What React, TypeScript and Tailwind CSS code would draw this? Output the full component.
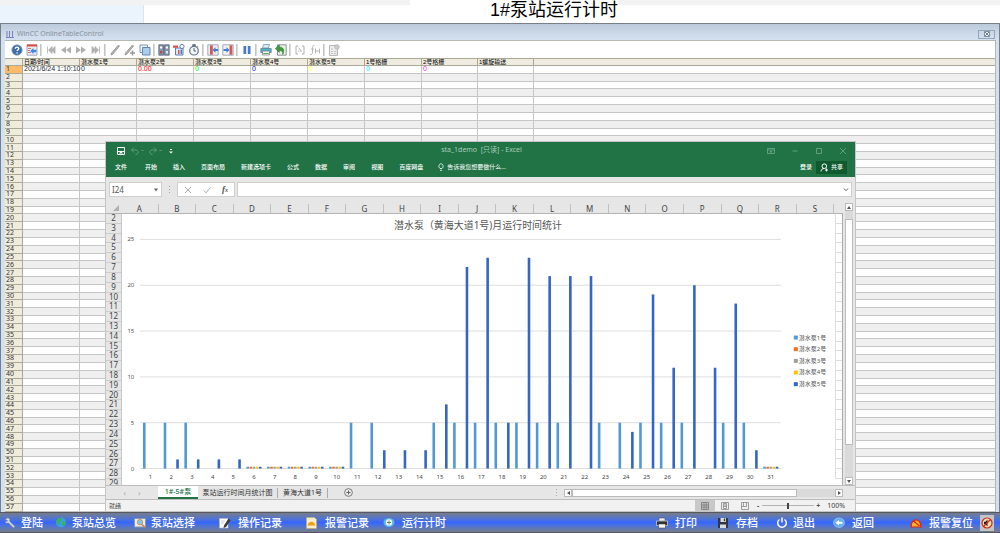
import { useState } from 'react'
import type { ReactNode } from 'react'

const columns = [
  { name: '日期/时间', value: '2021/6/24 1:10:10', color: 'text-gray-800', width: 'w-[57px]' },
  { name: '潜水泵1号', value: '0', color: 'text-gray-800', width: 'w-[57px]' },
  { name: '潜水泵2号', value: '0.00', color: 'text-[#ff0000]', width: 'w-[57px]' },
  { name: '潜水泵3号', value: '0', color: 'text-[#00ff00]', width: 'w-[57px]' },
  { name: '潜水泵4号', value: '0', color: 'text-[#0000ff]', width: 'w-[57px]' },
  { name: '潜水泵5号', value: '0', color: 'text-[#ffff00]', width: 'w-[57px]' },
  { name: '1号格栅', value: '0', color: 'text-[#00ffff]', width: 'w-[57px]' },
  { name: '2号格栅', value: '0', color: 'text-[#ff00ff]', width: 'w-[56px]' },
  { name: '1螺旋输送', value: '', color: 'text-gray-800', width: 'w-[56px]' },
]

const tableRows = Array.from({ length: 57 }, (_, i) => i + 1)

const series = [
  { name: '潜水泵1号', color: '#5099d6' },
  { name: '潜水泵2号', color: '#f0711f' },
  { name: '潜水泵3号', color: '#a0a0a0' },
  { name: '潜水泵4号', color: '#ffc000' },
  { name: '潜水泵5号', color: '#3566c1' },
]

const TINY = 0.2
const tinyDays = [6, 7, 8, 9, 10, 31]
const pump1Days = [1, 2, 3, 11, 12, 15, 16, 17, 18, 19, 20, 21, 23, 24, 25, 26, 27, 29, 30]
const pump5: Record<number, number> = {
  2: 1, 3: 1, 4: 1, 5: 1, 12: 2, 13: 2, 14: 2, 15: 7, 16: 22, 17: 23, 18: 5, 19: 23, 20: 21,
  21: 21, 22: 21, 24: 4, 25: 19, 26: 11, 27: 20, 28: 11, 29: 18, 30: 2,
}
const days = Array.from({ length: 31 }, (_, i) => i + 1)

function hours(day: number, s: number) {
  if (tinyDays.includes(day)) return TINY
  if (s === 0) return pump1Days.includes(day) ? 5 : 0
  if (s === 4) return pump5[day] || 0
  return 0
}

/* ---------- toolbar icons ---------- */

function Icon({ children, className = 'size-3' }: { children: ReactNode; className?: string }) {
  return (
    <svg viewBox="0 0 12 12" className={`${className} shrink-0`} fill="none" aria-hidden="true">
      {children}
    </svg>
  )
}

const G = '#b0b0b0'

const toolGroups: { label: string; icon: ReactNode }[][] = [
  [
    { label: '帮助', icon: <><circle cx="6" cy="6" r="5.2" fill="#3f6fa8" stroke="#8a9fb8" strokeWidth=".8" /><path d="M4.3 4.8c0-2.4 3.5-2.2 3.5-.2 0 1.2-1.7 1.2-1.7 2.5M6.1 8.2v1.2" stroke="#fff" strokeWidth="1.3" /></> },
    { label: '配置', icon: <><path d="M1 .8h10v10.4H1z" fill="#e9eef6" stroke="#8896b0" strokeWidth=".8" /><path d="M1 .5h10v2H1z" fill="#e04a40" /><path d="M2 4.5h3M2 6.5h2M2 8.5h3" stroke="#d66" strokeWidth=".9" /><path d="M4.2 7l3.2-3v1.8h3v2.4h-3V10z" fill="#3f86dc" /></> },
  ],
  [
    { label: '第一条', icon: <path d="M2.5 2.5v7M10 2.5L6.5 6 10 9.500zM7 2.500L3.500 6 7 9.500z" fill={G} stroke={G} strokeWidth=".8" /> },
    { label: '上一页', icon: <path d="M6 2.500L1 6l5 3.500zM11 2.500L6 6l5 3.500z" fill={G} /> },
    { label: '下一页', icon: <path d="M1 2.500L6 6 1 9.500zM6 2.500L11 6 6 9.500z" fill={G} /> },
    { label: '最后一条', icon: <path d="M9.500 2.500v7M2 2.500L5.500 6 2 9.500zM5 2.500L8.500 6 5 9.500z" fill={G} stroke={G} strokeWidth=".8" /> },
  ],
  [
    { label: '编辑', icon: <path d="M9.500 1L10.500 2 4 10l-2 1 .5-2z" fill="#b5b5b5" stroke="#8f8f8f" strokeWidth=".8" /> },
    { label: '新建', icon: <><path d="M8.500 1L9.500 2 3 10l-2 1 .5-2z" fill="#b5b5b5" stroke="#8f8f8f" strokeWidth=".8" /><path d="M8.500 6.500v5M6 9h5" stroke="#9a9a9a" strokeWidth="1.500" /></> },
    { label: '复制', icon: <><path d="M1 1h7.500v7.500H1z" fill="#eef4fa" stroke="#7d96b8" /><path d="M3.500 3.500H11v7.500H3.500z" fill="#a9cdea" stroke="#5f87b0" /></> },
  ],
  [
    { label: '选择数据连接', icon: <><path d="M.8.800h4.700v10.400H.8zM6.500.800h4.700v10.400H6.500z" fill="#8595ae" stroke="#54647e" strokeWidth=".8" /><path d="M2 2.500h2.200v2H2zM7.800 2.500H10v2H7.800z" fill="#fff" /><path d="M2 7h2.200v2.500H2z" fill="#c04848" /><path d="M7.800 7H10v2.500H7.800z" fill="#dfe6ef" /></> },
    { label: '选择时间范围', icon: <><path d="M2.500 4h7.500v7H2.500z" fill="#dce8f6" stroke="#5c7fb4" /><path d="M0 1.500h5v2.300H0z" fill="#e2524a" /><path d="M5 6h1.500v4H5z" fill="#e2524a" /><path d="M7.500 5.500H9V10H7.500z" fill="#4d83c9" /><circle cx="9" cy="2.500" r="2.100" fill="#fff" stroke="#5780bd" /></> },
    { label: '时间基准', icon: <><path d="M4.700.500h2.600v1.500H4.700zM9 2l1.300 1" fill="#65768a" stroke="#65768a" strokeWidth=".8" /><circle cx="6" cy="6.700" r="4.300" fill="#f4f6f8" stroke="#65768a" strokeWidth="1.200" /><path d="M6 4v3h2" stroke="#465568" strokeWidth=".9" /></> },
  ],
  [
    { label: '上一列', icon: <><path d="M.8.800h10.400v10.400H.8z" fill="#eef1f6" stroke="#8a96aa" strokeWidth=".8" /><path d="M3 1.300h2.800v9.400H3z" fill="#d9574f" /><path d="M5.500 6l3-2.700v1.700H11v2H8.500v1.700z" fill="#3d7fd6" /></> },
    { label: '下一列', icon: <><path d="M.8.800h10.400v10.400H.8z" fill="#eef1f6" stroke="#8a96aa" strokeWidth=".8" /><path d="M7.500 1.300h2.800v9.400H7.500z" fill="#d9574f" /><path d="M7.500 6l-3-2.700v1.700H1.500v2h3v1.700z" fill="#3d7fd6" /></> },
  ],
  [{ label: '停止', icon: <path d="M2.500 2h2.700v8H2.500zM6.800 2h2.700v8H6.800z" fill="#4a76cc" /> }],
  [
    { label: '打印', icon: <><path d="M3.500.500h6L8.500 4H2.500z" fill="#dceaf8" stroke="#6f8ba8" strokeWidth=".7" /><path d="M.8 4.500h10.400v4H.8z" fill="#4fb3c6" stroke="#53758c" strokeWidth=".7" /><path d="M2.500 7h7v4h-7z" fill="#f4f4f4" stroke="#777" strokeWidth=".7" /><path d="M3.300 9.500h5.400" stroke="#4fae51" /></> },
    { label: '导出', icon: <><path d="M2.500.800h8.700v10.400H2.500z" fill="#eaf0e8" stroke="#6d7a86" strokeWidth=".8" /><path d="M.3 4.500L4.300 1v2c4.200 0 5.500 3 3.500 7.500.2-3-1-4-3.500-4v2z" fill="#3f9a3a" stroke="#236b20" strokeWidth=".5" /></> },
  ],
  [
    { label: '统计范围', icon: <path d="M4 2H2v8h2M8 2h2v8H8M4.500 4l2.500 2v2M4 7h1.500" stroke="#b0b0b0" strokeWidth="1" /> },
    { label: '计算统计', icon: <path d="M5.500 1.500C3.500 1 3.500 3 3.500 4.500v4C3.500 10 2.500 11 1 10.500M2 5h3M6.500 4.500v5M10.500 4.500v5M6.500 7h4" stroke="#b8b8b8" strokeWidth="1" /> },
  ],
  [{ label: '属性', icon: <><path d="M1.500 1.500h8v10h-8z" fill="#eee" stroke="#b8b8b8" /><path d="M3 5h2M3 7.500h2M3 9.500h2M6 7.500h2.500M6 9.500h2.500" stroke="#b5b5b5" strokeWidth=".8" /><circle cx="9" cy="3" r="2.300" fill="#ccc" stroke="#aaa" strokeWidth=".6" /></> }],
]

function Toolbar() {
  return (
    <div className="flex h-[17px] shrink-0 items-center bg-white pl-1">
      {toolGroups.map((group, i) => (
        <div key={i} className="flex items-center">
          {i > 0 && <span className="mx-[1px] h-3 w-[2px] border-r border-[#dcdcdc] bg-[#c4c4c4]" />}
          {group.map(t => (
            <button key={t.label} type="button" aria-label={t.label} title={t.label} className="flex w-[15px] items-center justify-center">
              <Icon>{t.icon}</Icon>
            </button>
          ))}
        </div>
      ))}
    </div>
  )
}

function OnlineTable() {
  return (
    <table className="h-full w-full table-fixed border-separate border-spacing-0 text-left font-['Liberation_Sans','Noto_Sans_CJK_SC',sans-serif] text-[7px] leading-[6px] whitespace-nowrap">
      <colgroup>
        <col className="w-[18px]" />
        {columns.map(c => <col key={c.name} className={c.width} />)}
        <col />
      </colgroup>
      <thead>
        <tr className="bg-[#efebdf]">
          <th className="border-t border-r border-b border-[#a9a998] p-0" />
          {columns.map(c => (
            <th key={c.name} className="border-t border-r border-b border-[#a9a998] py-0 pl-px text-[6px] font-normal text-black">{c.name}</th>
          ))}
          <th className="border-t border-b border-[#a9a998] p-0" />
        </tr>
      </thead>
      <tbody>
        {tableRows.map(n => (
          <tr key={n} className="odd:bg-white even:bg-[#efefef]">
            <th className={`border-r border-b border-[#a9a998] py-0 pl-px font-['Noto_Sans',sans-serif] font-normal text-[#333] ${n === 1 ? 'bg-[#fcbb6a]' : 'bg-[#efecdb]'}`}>{n}</th>
            {columns.map(c => (
              <td key={c.name} className={`border-r border-b border-[#c6c6c6] py-0 pl-px ${c.color}`}>{n === 1 ? c.value : ''}</td>
            ))}
            <td className="border-b border-[#c6c6c6] p-0" />
          </tr>
        ))}
      </tbody>
    </table>
  )
}

/* ---------- excel window ---------- */

const ribbonTabs = ['开始', '插入', '页面布局', '新建选项卡', '公式', '数据', '审阅', '视图', '百度网盘']
const letters = 'ABCDEFGHIJKLMNOPQRS'.split('')
const sheetRows = Array.from({ length: 27 }, (_, i) => i + 2)

function ExcelTitle() {
  return (
    <div className="bg-[#217346] text-white">
      <div className="grid h-[17px] grid-cols-3 items-center pr-2 pl-[10px] text-[7px]">
        <div className="flex items-center gap-1">
          <button type="button" aria-label="保存">
            <svg viewBox="0 0 10 10" className="size-[10px]" fill="none" stroke="#fff"><path d="M1.500 1.500h7v7h-7z M1.500 5.500h7M4 8.500v-2h2v2" /></svg>
          </button>
          <button type="button" aria-label="撤消">
            <svg viewBox="0 0 14 10" className="h-[10px] w-[14px]" fill="none" stroke="#5f9c7b"><path d="M4 1.500L1.500 4 4 6.500M1.500 4h4.500c3 0 3 4.500-.5 4.500M11.500 4.500h2" /></svg>
          </button>
          <button type="button" aria-label="恢复">
            <svg viewBox="0 0 14 10" className="h-[10px] w-[14px]" fill="none" stroke="#5f9c7b"><path d="M6 1.500L8.500 4 6 6.500M8.500 4H4C1 4 1 8.500 4.500 8.500M11.500 4.500h2" /></svg>
          </button>
          <button type="button" aria-label="自定义快速访问工具栏" className="ml-[2px]">
            <svg viewBox="0 0 6 8" className="h-2 w-1.5" fill="#fff"><path d="M2 2h2v1H2zM1 4.500h4L3 6.500z" /></svg>
          </button>
        </div>
        <span className="text-center whitespace-pre text-[#a8cbb8]">sta_1demo  [只读] - Excel</span>
        <div className="flex items-center justify-end gap-4">
          <button type="button" aria-label="功能区显示选项"><svg viewBox="0 0 8 8" className="size-2" fill="none" stroke="#6fa98a" strokeWidth=".8"><path d="M.5 1.500h7v5h-7zM.5 3h7M4 6V4M3 5l1-1 1 1" /></svg></button>
          <button type="button" aria-label="最小化"><svg viewBox="0 0 8 8" className="size-2" stroke="#6fa98a" strokeWidth=".8"><path d="M1.500 4h5" /></svg></button>
          <button type="button" aria-label="最大化"><svg viewBox="0 0 8 8" className="size-2" fill="none" stroke="#6fa98a" strokeWidth=".8"><path d="M1.500 1.500h5v5h-5z" /></svg></button>
          <button type="button" aria-label="关闭"><svg viewBox="0 0 8 8" className="size-2" stroke="#6fa98a" strokeWidth=".8"><path d="M1 1l6 6M7 1L1 7" /></svg></button>
        </div>
      </div>
      <div className="flex h-[18px] items-center gap-4 pr-2 pb-[2px] pl-[9px] text-[6px] font-medium whitespace-nowrap">
        <button type="button" className="mr-[2px]">文件</button>
        {ribbonTabs.map(t => <button key={t} type="button">{t}</button>)}
        <button type="button" className="-ml-[2px] flex items-center gap-[2px] font-normal">
          <svg viewBox="0 0 8 8" className="size-2" fill="none" stroke="#fff" strokeWidth=".8"><path d="M3 5.500C1 3.500 2 .800 4 .800s3 2.700 1 4.700zM3 7.300h2" /></svg>
          告诉我您想要做什么...
        </button>
        <div className="ml-auto flex items-center gap-1">
          <button type="button">登录</button>
          <button type="button" className="flex h-[13px] items-center gap-[2px] bg-[#0f5a2e] px-1">
            <svg viewBox="0 0 9 9" className="size-[9px]" fill="none" stroke="#fff"><circle cx="4.300" cy="3.200" r="2.300" /><path d="M1 8.500c0-2 1.500-3 3-3M6.500 5.500v3M5 7h3" /></svg>
            共享
          </button>
        </div>
      </div>
    </div>
  )
}

function FormulaBar() {
  return (
    <div className="flex h-[25px] items-center bg-[#e6e6e6] px-[3px]">
      <div className="flex h-[15px] w-[53px] items-center border border-[#cfcfcf] bg-white px-[2px]">
        <input aria-label="名称框" defaultValue="I24" className="w-0 flex-1 text-[8px] leading-3 text-[#555] outline-none" />
        <svg viewBox="0 0 6 4" className="h-1 w-1.5" fill="#666"><path d="M1 .500h4L3 3.500z" /></svg>
      </div>
      <svg viewBox="0 0 3 8" className="mx-[6px] h-2 w-[3px]" fill="#aaa"><path d="M1 0h1v1H1zM1 3h1v1H1zM1 6h1v1H1z" /></svg>
      <div className="flex h-[15px] w-[58px] items-center justify-between border border-[#cfcfcf] bg-white px-1.5">
        <button type="button" aria-label="取消"><svg viewBox="0 0 8 8" className="size-2" stroke="#aaa"><path d="M1 1l6 6M7 1L1 7" /></svg></button>
        <button type="button" aria-label="输入"><svg viewBox="0 0 8 8" className="size-2" fill="none" stroke="#aaa"><path d="M.8 4.500L3 6.800 7.500 1.500" /></svg></button>
        <button type="button" aria-label="插入函数" className="font-['Liberation_Serif',serif] text-[9px] leading-3 font-bold text-[#555] italic">f<span className="text-[6px]">x</span></button>
      </div>
      <div className="ml-[2px] flex h-[15px] flex-1 items-center border border-[#cfcfcf] bg-white px-[2px]">
        <input aria-label="编辑栏" className="w-0 flex-1 text-[8px] leading-3 outline-none" />
        <svg viewBox="0 0 6 4" className="h-1 w-1.5" fill="none" stroke="#666"><path d="M1 .500l2 2.200L5 .500" /></svg>
      </div>
    </div>
  )
}

function Chart() {
  const left = 17
  const step = 20.75
  const base = 255.5
  const unit = 9.2
  return (
    <svg viewBox="0 0 713 272" className="h-full min-w-0 flex-1 bg-white" role="img" aria-label="潜水泵月运行时间统计">
      <text x="356" y="15" textAnchor="middle" fontSize="10" fill="#555">潜水泵（黄海大道1号)月运行时间统计</text>
      {[0, 5, 10, 15, 20, 25].map(v => (
        <g key={v}>
          <path d={`M${left} ${Math.round(base - v * unit) - 0.5}H660`} stroke="#dedede" />
          <text x="11" y={base - v * unit + 2} textAnchor="end" fontSize="6" fill="#555">{v}</text>
        </g>
      ))}
      {days.map((d, i) => {
        const cx = left + step * (i + 0.5)
        return (
          <g key={d}>
            {series.map((s, k) => {
              const h = hours(d, k) * unit
              return h > 0 && <rect key={s.name} x={cx + (k - 2) * 3.15 - 1.3} y={base - h} width="2.600" height={h} fill={s.color} />
            })}
            <text x={cx} y="266" textAnchor="middle" fontSize="6" fill="#444">{d}</text>
          </g>
        )
      })}
      {series.map((s, k) => (
        <g key={s.name}>
          <rect x="673" y={122 + k * 11.7} width="4" height="4" fill={s.color} />
          <text x="678" y={126 + k * 11.7} fontSize="6" fill="#555">{s.name}</text>
        </g>
      ))}
    </svg>
  )
}

function SheetArea() {
  return (
    <div className="flex min-h-0 flex-1 bg-[#e6e6e6]">
      <div className="flex min-w-0 flex-1 flex-col text-[8px] leading-[9px] text-[#444]">
        <div className="flex h-3 shrink-0 items-end border-b border-[#b5b5b5] pr-[9px]">
          <div className="flex w-[15px] items-center justify-end pr-[2px] pb-[2px]">
            <svg viewBox="0 0 6 6" className="size-1.5" fill="#b0b0b0"><path d="M6 0v6H0z" /></svg>
          </div>
          {letters.map(l => <div key={l} className="flex-1 border-r border-[#c0c0c0] text-center">{l}</div>)}
        </div>
        <div className="flex min-h-0 flex-1">
          <div className="flex w-4 shrink-0 flex-col border-r border-[#c8c8c8] text-center leading-[8px]">
            {sheetRows.map(r => <div key={r} className="flex-1 border-b border-[#cdcdcd]">{r}</div>)}
            <div className="h-[6px] shrink-0 overflow-hidden">29</div>
          </div>
          <Chart />
          <div className="flex w-2 shrink-0 flex-col border-r border-[#aaa] bg-white">
            {sheetRows.map(r => <div key={r} className="flex-1 border-b border-l border-[#dedede]" />)}
            <div className="h-[6px] shrink-0" />
          </div>
        </div>
      </div>
      <div className="flex w-3 flex-col px-[2px] pt-px">
        <button type="button" aria-label="向上滚动" className="flex h-2 items-center justify-center border border-[#bbb] bg-white">
          <svg viewBox="0 0 4 3" className="h-[3px] w-1" fill="#555"><path d="M0 3h4L2 0z" /></svg>
        </button>
        <div className="flex min-h-0 flex-1 flex-col bg-[#dadada] pt-2 pb-8">
          <div className="flex-1 border border-[#bbb] bg-white" />
        </div>
        <button type="button" aria-label="向下滚动" className="flex h-2 items-center justify-center border border-[#bbb] bg-white">
          <svg viewBox="0 0 4 3" className="h-[3px] w-1" fill="#555"><path d="M0 0h4L2 3z" /></svg>
        </button>
      </div>
    </div>
  )
}

function SheetTabs() {
  return (
    <div className="flex h-[15px] shrink-0 items-center border-t border-b border-[#bdbdbd] bg-[#e6e6e6] text-[7px] leading-[10px] whitespace-nowrap text-[#333]">
      <div className="flex w-[52px] justify-center gap-3 text-[8px] text-[#aaa]">
        <button type="button" aria-label="上一个工作表">‹</button>
        <button type="button" aria-label="下一个工作表">›</button>
      </div>
      <button type="button" className="h-[13px] w-10 border-b-2 border-[#217346] bg-white font-medium text-[#217346]">1#-5#泵</button>
      <button type="button" className="w-[80px] border-r border-[#aaa]">泵站运行时间月统计图</button>
      <button type="button" className="w-[50px] border-r border-[#aaa]">黄海大道1号</button>
      <button type="button" aria-label="新工作表" className="ml-4">
        <svg viewBox="0 0 9 9" className="size-[9px]" fill="none" stroke="#666"><circle cx="4.500" cy="4.500" r="3.900" strokeWidth=".8" /><path d="M4.500 2.500v4M2.500 4.500h4" /></svg>
      </button>
      <div className="ml-auto flex w-[300px] items-center pr-3">
        <svg viewBox="0 0 3 8" className="mr-[6px] h-2 w-[3px]" fill="#aaa"><path d="M1 0h1v1H1zM1 3h1v1H1zM1 6h1v1H1z" /></svg>
        <button type="button" aria-label="向左滚动" className="flex size-2 items-center justify-center border border-[#bbb] bg-white">
          <svg viewBox="0 0 3 4" className="h-1 w-[3px]" fill="#555"><path d="M3 0v4L0 2z" /></svg>
        </button>
        <div className="flex h-2 flex-1 bg-[#dadada] pr-[38px]"><div className="flex-1 border border-[#bbb] bg-white" /></div>
        <button type="button" aria-label="向右滚动" className="flex size-2 items-center justify-center border border-[#bbb] bg-white">
          <svg viewBox="0 0 3 4" className="h-1 w-[3px]" fill="#555"><path d="M0 0v4l3-2z" /></svg>
        </button>
      </div>
    </div>
  )
}

function StatusBar() {
  const [zoom, setZoom] = useState(100)
  return (
    <div className="flex h-[11px] shrink-0 items-center bg-[#f1f1f1] pr-[10px] pl-[3px] text-[7px] leading-[10px] text-[#444]">
      <span className="text-[6px]">就绪</span>
      <div className="ml-auto flex items-center">
        <button type="button" aria-label="普通" className="flex h-[11px] w-5 items-center justify-center bg-[#c8c8c8]">
          <svg viewBox="0 0 8 8" className="size-2" fill="none" stroke="#777" strokeWidth=".8"><path d="M.5.500h7v7h-7zM.5 3h7M.5 5.200h7M3 .500v7M5.200.500v7" /></svg>
        </button>
        <button type="button" aria-label="页面布局" className="flex w-5 items-center justify-center">
          <svg viewBox="0 0 8 8" className="size-2" fill="none" stroke="#888" strokeWidth=".8"><path d="M.5.500h7v7h-7zM2.500 1.500h3v5h-3zM2.500 3h3M2.500 4.500h3" /></svg>
        </button>
        <button type="button" aria-label="分页预览" className="flex w-5 items-center justify-center">
          <svg viewBox="0 0 8 8" className="size-2" fill="none" stroke="#888" strokeWidth=".8"><path d="M.5.500h7v7h-7zM2.500.500v4h3v-4M.5 4.500h2" /></svg>
        </button>
        <button type="button" aria-label="缩小" className="w-[6px] font-bold">-</button>
        <input
          type="range" aria-label="显示比例" min={10} max={190} value={zoom}
          onChange={e => setZoom(Number(e.target.value))}
          className="mx-px h-[7px] w-[52px] appearance-none bg-[linear-gradient(#b5b5b5,#b5b5b5)] bg-[length:100%_1px] bg-center bg-no-repeat [&::-webkit-slider-thumb]:h-[6px] [&::-webkit-slider-thumb]:w-[2px] [&::-webkit-slider-thumb]:appearance-none [&::-webkit-slider-thumb]:bg-[#444]"
        />
        <button type="button" aria-label="放大" className="w-[6px] font-bold">+</button>
        <span className="ml-[6px]">{zoom}%</span>
      </div>
    </div>
  )
}

/* ---------- bottom navigation ---------- */

type NavItem = { label: string; gap: string; icon: ReactNode }

const navLeft: NavItem[] = [
  { label: '登陆', gap: 'gap-[5px]', icon: <><path d="M1 2.500L4 .500l2 2-.3 1.800L11 9.500 9.500 11 4.500 6 2 6.300 1 4l2 .500.800-.800z" fill="#d4d8df" stroke="#6f788a" strokeWidth=".5" /></> },
  { label: '泵站总览', gap: 'ml-3 gap-[5px]', icon: <><circle cx="6" cy="5.500" r="5" fill="#3aa0e6" /><path d="M2 2.500C4 0 7 1 6.500 3L4.500 5 5 7.500 3 8C1 6 1 4 2 2.500zM8 4l3 .500-1 3.500-2.500 1L7 6.500z" fill="#3bb05c" /></> },
  { label: '泵站选择', gap: 'ml-[18px] gap-[5px]', icon: <><path d="M.5 1.500h11v8.500H.5z" fill="#e6eef8" stroke="#8796ac" /><circle cx="6" cy="5.200" r="2.700" fill="#89c4ee" stroke="#d59445" /><path d="M8 7.500l3 3" stroke="#d08530" strokeWidth="1.600" /></> },
  { label: '操作记录', gap: 'ml-6 gap-[7px]', icon: <><path d="M.5 1.500h8.500v9.500H.5z" fill="#fff" stroke="#bbb" strokeWidth=".6" /><path d="M2 4h4M2 6h3" stroke="#aaa" strokeWidth=".6" /><path d="M9.500 1.500l2 2L7 10l-2.500 1L5 8.500z" fill="#3b3b3b" /></> },
  { label: '报警记录', gap: 'ml-6 gap-[7px]', icon: <><path d="M.5.500h8l2 2v9H.5z" fill="#f7edcf" stroke="#c5aa62" strokeWidth=".6" /><path d="M1.500 8.500c.8-5 7-5 7.800 0z" fill="#f0a000" /></> },
  { label: '运行计时', gap: 'ml-[14px] gap-[7px]', icon: <><ellipse cx="6" cy="5.500" rx="5.500" ry="4.500" fill="#5ab4ea" /><circle cx="6" cy="5.500" r="3.200" fill="#f5f7f2" /><path d="M6 3.500v4M4 5.500h4" stroke="#578a60" /></> },
]

const navRight: NavItem[] = [
  { label: '打印', gap: 'gap-[7px]', icon: <><path d="M3 1h6v3H3z" fill="#eee" stroke="#555" strokeWidth=".6" /><path d="M.5 4h11v4.500H.5z" fill="#303030" stroke="#ddd" strokeWidth=".7" /><path d="M2.500 7h7v4h-7z" fill="#f6f6f6" stroke="#444" strokeWidth=".6" /></> },
  { label: '存档', gap: 'ml-5 gap-[7px]', icon: <><path d="M1 1h10v10H1z" fill="#33363c" /><path d="M3.500 1h5.500v4H3.500zM3 7.500h6V11H3z" fill="#d9dce2" /><path d="M6.800 1.500h1.400v2.700H6.800z" fill="#33363c" /></> },
  { label: '退出', gap: 'ml-[18px] gap-[5px]', icon: <path d="M3.500 2.500a4.300 4.300 0 1 0 5 0M6 .500v5" stroke="#fff" strokeWidth="1.500" /> },
  { label: '返回', gap: 'ml-[18px] gap-[7px]', icon: <><ellipse cx="6" cy="5.700" rx="5.500" ry="4.800" fill="#65aef0" stroke="#a8d4fb" strokeWidth=".6" /><path d="M2.500 5.700L6 3v1.700h3.500v2H6v1.700z" fill="#fff" /></> },
  { label: '报警复位', gap: 'ml-9 gap-[7px]', icon: <><path d="M1 10C.5 1 11 0 11 10z" fill="#f5b51e" stroke="#d8221b" strokeWidth="1.200" /><path d="M3 3.500L9.500 9" stroke="#e0261e" strokeWidth="1.300" /></> },
]

function NavButton({ item }: { item: NavItem }) {
  return (
    <button type="button" className={`flex items-center ${item.gap}`}>
      <Icon>{item.icon}</Icon>
      {item.label}
    </button>
  )
}

function BottomNav() {
  return (
    <nav className="flex h-[21px] shrink-0 items-center border-t border-b border-[#55585f] bg-linear-to-b from-[#777b88] via-[#3765ff] to-[#777b88] pr-[6px] pl-1 text-[11px] leading-4 font-medium whitespace-nowrap text-white">
      {navLeft.map(i => <NavButton key={i.label} item={i} />)}
      <div className="ml-auto flex items-center">
        {navRight.map(i => <NavButton key={i.label} item={i} />)}
        <button type="button" aria-label="消音" className="ml-[7px] flex h-4 w-[14px] items-center justify-center bg-[#c4c4c4]">
          <Icon>
            <circle cx="6" cy="6" r="5" fill="#f4e3b0" stroke="#cf2a20" strokeWidth="1.200" />
            <path d="M3 4.700h1.500L6.500 2.500v7L4.500 7.300H3z" fill="#1c1c1c" />
            <path d="M9.500 2.500l-7 7" stroke="#cf2a20" strokeWidth="1.200" />
          </Icon>
        </button>
      </div>
    </nav>
  )
}

export default function App() {
  return (
    <div className="relative flex h-screen flex-col overflow-hidden bg-white font-['Noto_Sans','Noto_Sans_CJK_SC',sans-serif]">
      <header className="flex h-[23px] shrink-0">
        <div className="flex w-[41%] flex-col">
          <div className="h-[5px] bg-[#f2f2f2]" />
          <div className="w-[144px] flex-1 border-r border-[#dbe4f0] bg-[#ebf3fd]" />
        </div>
        <h1 className="shrink-0 pl-20 font-['Liberation_Sans','Noto_Sans_CJK_SC',sans-serif] text-[18px] leading-[21px] whitespace-nowrap text-black">1#泵站运行计时</h1>
        <div className="h-[5px] flex-1 bg-[#f2f2f2]" />
      </header>

      <section className="flex min-h-0 flex-1 flex-col border-t border-r border-l border-[#777f88] bg-[#d2e0f0] pr-[3px] pl-1">
        <div className="-mr-[3px] -ml-1 flex h-4 shrink-0 items-center justify-between bg-linear-to-b from-[#bccbdb] to-[#d5e2f1] pr-1 pl-[5px] text-[7px] leading-3 text-[#88929e]">
          <div className="flex items-center gap-[3px] pt-1">
            <svg viewBox="0 0 8 7" className="h-[7px] w-2" stroke="#7f83c4"><path d="M1 0v6M3.500 0v6M6.500 0v6M0 6.500h8" /></svg>
            WinCC OnlineTableControl
          </div>
          <button type="button" aria-label="关闭" className="mt-1 flex h-[9px] w-[17px] items-center justify-center border border-[#94a6bc]">
            <svg viewBox="0 0 6 6" className="size-1.5" stroke="#68788c"><path d="M.5.500h5v5h-5z" fill="#fff" strokeWidth=".8" /><path d="M1 1l4 4M5 1L1 5" /></svg>
          </button>
        </div>
        <div className="flex min-h-0 flex-1 flex-col border-t border-r border-[#b4b9b0] bg-white">
          <Toolbar />
          <div className="min-h-0 flex-1">
            <OnlineTable />
          </div>
        </div>
      </section>

      {/* excel window floating over the table */}
      <section className="absolute top-[142px] right-[145px] bottom-[22px] left-[106px] flex flex-col shadow-[0_0_0_1px_#c4c4c4]">
        <ExcelTitle />
        <FormulaBar />
        <SheetArea />
        <SheetTabs />
        <StatusBar />
      </section>

      <BottomNav />
    </div>
  )
}
